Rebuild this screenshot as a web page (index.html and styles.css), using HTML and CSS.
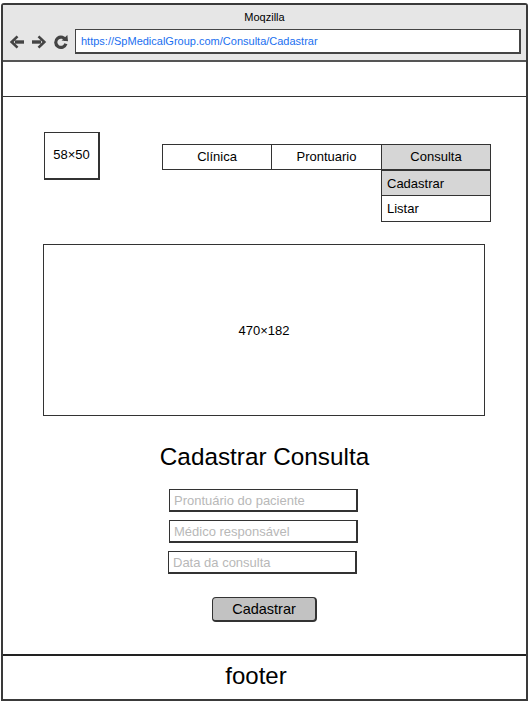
FILE: index.html
```html
<!DOCTYPE html>
<html lang="pt">
<head>
<meta charset="utf-8">
<title>Moqzilla</title>
<link rel="stylesheet" href="styles.css">
</head>
<body>
<div class="window">
  <div class="chrome">
    <div class="title">Moqzilla</div>
    <div class="toolbar">
      <div class="icons">
        <svg width="16" height="16" viewBox="0 0 16 16"><path d="M15 8H6" fill="none" stroke="#444" stroke-width="3.4"/><path d="M0.8 8L7.6 1.4 9.4 3.2 4.6 8 9.4 12.8 7.6 14.6z" fill="#444"/></svg>
        <svg width="16" height="16" viewBox="0 0 16 16"><path d="M1 8h9" fill="none" stroke="#444" stroke-width="3.4"/><path d="M15.2 8L8.4 1.4 6.6 3.2 11.4 8 6.6 12.8 8.4 14.6z" fill="#444"/></svg>
        <svg width="16" height="16" viewBox="0 0 16 16"><path d="M12.8 6.4A5.2 5.2 0 1 0 12.9 9.8" fill="none" stroke="#444" stroke-width="3.2"/><path d="M8.6 6.6l6.4 0.6-0.6-6.2z" fill="#444"/></svg>
      </div>
      <div class="url">https://SpMedicalGroup.com/Consulta/Cadastrar</div>
    </div>
  </div>
  <div class="topstrip"></div>
  <main class="content">
    <div class="top">
      <div class="logo">58×50</div>
      <nav class="nav">
        <div class="nav-item">Clínica</div>
        <div class="nav-item">Prontuario</div>
        <div class="nav-item dropdown-host">
          <div class="nav-link active">Consulta</div>
          <div class="dropdown">
            <div class="drop-item active">Cadastrar</div>
            <div class="drop-item">Listar</div>
          </div>
        </div>
      </nav>
    </div>
    <div class="banner">470×182</div>
    <h1 class="heading">Cadastrar Consulta</h1>
    <form class="form">
      <input class="field" type="text" placeholder="Prontuário do paciente">
      <input class="field" type="text" placeholder="Médico responsável">
      <input class="field field-shift" type="text" placeholder="Data da consulta">
      <button class="btn" type="button">Cadastrar</button>
    </form>
  </main>
  <footer class="footer">footer</footer>
</div>
</body>
</html>
```

FILE: styles.css
```css
* { box-sizing: border-box; }
html, body { margin: 0; padding: 0; background: #fff; }
body { font-family: "Liberation Sans", Arial, sans-serif; color: #000; }

.window {
  margin: 3px 0 0 1px;
  width: 527px;
  height: 698px;
  border: 2px solid #3a3a3a;
  border-radius: 3px 3px 0 0;
  display: flex;
  flex-direction: column;
  background: #fff;
}

.chrome {
  background: #e6e6e6;
  height: 57px;
  border-bottom: 2px solid #555;
  display: flex;
  flex-direction: column;
}
.title {
  text-align: center;
  font-size: 11px;
  line-height: 13px;
  padding-top: 6px;
  height: 24px;
}
.toolbar {
  display: flex;
  align-items: center;
  padding-left: 6px;
  gap: 5px;
}
.icons { display: flex; gap: 6px; }
.icons svg { display: block; }
.url {
  width: 446px;
  height: 25px;
  border: 2px solid #444;
  border-top-width: 1px;
  border-left-width: 1px;
  background: #fff;
  color: #1a6ff0;
  font-size: 11px;
  line-height: 22px;
  padding-left: 5px;
  margin-left: 1px;
}

.topstrip {
  height: 35px;
  border-bottom: 1px solid #333;
}

.content {
  flex: 1;
  display: flex;
  flex-direction: column;
  align-items: center;
  padding-top: 35px;
}

.top {
  align-self: stretch;
  display: flex;
  align-items: flex-start;
  padding-left: 41px;
}
.logo {
  width: 56px;
  height: 48px;
  border: 1px solid #333;
  border-right-width: 2px;
  border-bottom-width: 2px;
  font-size: 13px;
  text-align: center;
  padding-top: 14px;
}
.nav {
  display: flex;
  margin-left: 62px;
  margin-top: 12px;
  font-size: 13px;
}
.nav-item {
  width: 110px;
  height: 26px;
  border: 1px solid #333;
  border-right: none;
  text-align: center;
  line-height: 24px;
}
.nav-item:first-child { width: 109px; }
.dropdown-host {
  position: relative;
  border-right: 1px solid #333;
  width: 110px;
}
.nav-link.active { background: #d6d6d6; height: 24px; }
.dropdown {
  position: absolute;
  left: -1px;
  top: 25px;
  width: 110px;
  text-align: left;
}
.drop-item {
  height: 26px;
  border: 1px solid #333;
  padding-left: 5px;
  line-height: 25px;
  background: #fff;
}
.drop-item + .drop-item { border-top: none; height: 26px; }
.drop-item.active { background: #d6d6d6; }

.banner {
  align-self: flex-start;
  margin-left: 40px;
  margin-top: 64px;
  width: 442px;
  height: 172px;
  border: 1px solid #333;
  display: flex;
  align-items: center;
  justify-content: center;
  font-size: 13px;
}

.heading {
  margin: 27px 0 0;
  font-size: 24.3px;
  font-weight: normal;
  line-height: 28px;
}

.form {
  display: flex;
  flex-direction: column;
  align-items: center;
  margin-top: 18px;
  padding-right: 2px;
}
.field {
  display: block;
  width: 189px;
  height: 23px;
  border: 1px solid #333;
  border-right-width: 2px;
  border-bottom-width: 2px;
  padding: 0 4px;
  font-family: "Liberation Sans", Arial, sans-serif;
  font-size: 13px;
  margin-bottom: 8px;
  background: #fff;
  outline: none;
}
.field::placeholder { color: #b8b8b8; }
.field-shift { position: relative; left: -1px; }

.btn {
  margin-top: 15px;
  margin-left: 2px;
  width: 105px;
  height: 25px;
  border: 1px solid #333;
  border-right-width: 2px;
  border-bottom-width: 2px;
  border-radius: 4px;
  background: #c2c2c2;
  font-family: "Liberation Sans", Arial, sans-serif;
  font-size: 14.5px;
  color: #000;
  padding: 0;
}

.footer {
  height: 45px;
  border-top: 2px solid #222;
  text-align: center;
  font-size: 24px;
  line-height: 40px;
  padding-right: 17px;
}
```
